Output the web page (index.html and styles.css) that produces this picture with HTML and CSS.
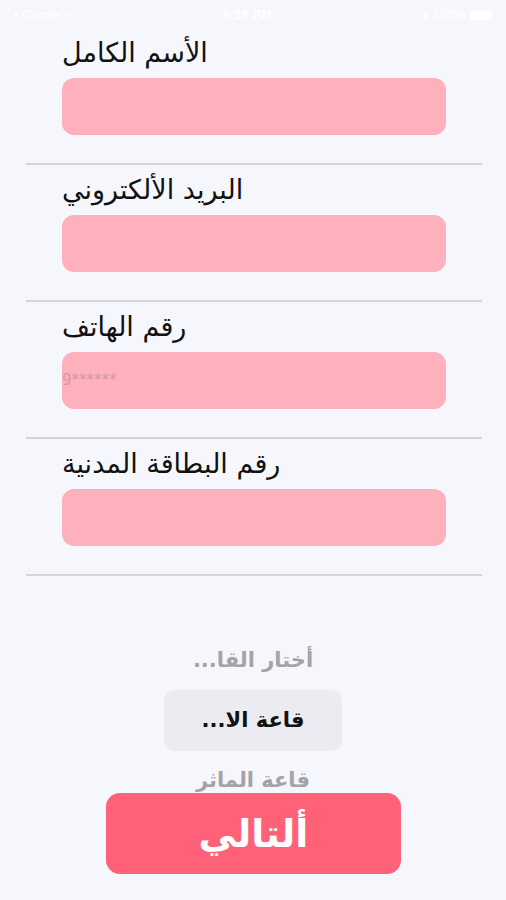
FILE: index.html
```html
<!DOCTYPE html>
<html lang="ar">
<head>
    <meta charset="utf-8">
    <title>التسجيل</title>
    <link rel="stylesheet" href="styles.css">
</head>
<body>
    <div class="status-bar">
        <span class="carrier">&#8226; Carrier &#8776;</span>
        <span class="clock">5:15 PM</span>
        <span class="battery">&#9679; 100% <i class="batt"></i></span>
    </div>

    <div class="form">
        <div class="field">
            <div class="label">الأسم الكامل</div>
            <div class="input"></div>
        </div>
        <div class="field">
            <div class="label">البريد الألكتروني</div>
            <div class="input"></div>
        </div>
        <div class="field">
            <div class="label">رقم الهاتف</div>
            <div class="input"><span class="placeholder">9******</span></div>
        </div>
        <div class="field">
            <div class="label">رقم البطاقة المدنية</div>
            <div class="input"></div>
        </div>
    </div>

    <div class="picker" dir="rtl">
        <div class="picker-item faded">أختار القا...</div>
        <div class="picker-item selected">قاعة الا...</div>
        <div class="picker-item faded">قاعة الماثر</div>
    </div>

    <div class="next-wrap">
        <button class="next">ألتالي</button>
    </div>
</body>
</html>
```

FILE: styles.css
```css
body {
    margin: 0;
    background-color: #f6f7fd;
    font-family: "DejaVu Sans", "Noto Sans", sans-serif;
    width: 506px;
    height: 900px;
    overflow: hidden;
}

.status-bar {
    height: 28px;
    display: flex;
    justify-content: space-between;
    align-items: center;
    padding: 0 14px;
    color: #ffffff;
    font-family: "Liberation Sans", sans-serif;
    font-size: 13px;
}

.clock {
    font-weight: bold;
}

.batt {
    display: inline-block;
    width: 22px;
    height: 9px;
    background-color: #ffffff;
    vertical-align: middle;
}

.form {
    margin: 0 24px 0 26px;
}

.field {
    padding: 10px 0 28px;
    border-bottom: 2px solid #d4d4da;
}

.label {
    padding-left: 36px;
    height: 30px;
    line-height: 30px;
    font-size: 27px;
    color: #111111;
    margin-bottom: 10px;
}

.input {
    margin: 0 36px;
    height: 57px;
    background-color: #ffb0bd;
    border-radius: 12px;
    display: flex;
    align-items: center;
}

.placeholder {
    color: #cf9aa5;
    font-size: 15px;
    margin-top: -2px;
}

.picker {
    margin-top: 66px;
    display: flex;
    flex-direction: column;
    align-items: center;
}

.picker-item {
    font-size: 21px;
    font-weight: bold;
}

.faded {
    color: #a3a3a8;
    height: 36px;
    line-height: 36px;
}

.selected {
    width: 178px;
    height: 61px;
    line-height: 61px;
    text-align: center;
    background-color: #ebebf1;
    border-radius: 10px;
    color: #111111;
    font-size: 21px;
    margin: 12px 0 11px;
}

.next-wrap {
    display: flex;
    justify-content: center;
    margin-top: -5px;
    position: relative;
}

.next {
    width: 295px;
    height: 81px;
    margin-left: 1px;
    border: none;
    border-radius: 14px;
    background-color: #ff6278;
    color: #ffffff;
    font-family: "DejaVu Sans", sans-serif;
    font-size: 38px;
    font-weight: bold;
}
```
